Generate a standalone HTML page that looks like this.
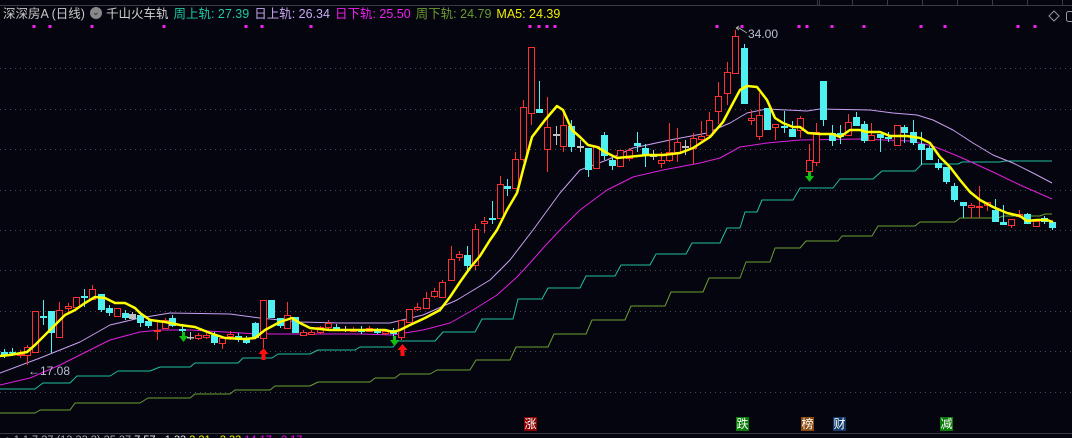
<!DOCTYPE html>
<html><head><meta charset="utf-8">
<style>
html,body{margin:0;padding:0;background:#05050f;}
#w{position:relative;width:1072px;height:438px;overflow:hidden;background:#05050f;font-family:"Liberation Sans","Noto Sans CJK SC",sans-serif;}
#hdr{position:absolute;left:3px;top:5px;font-size:12.5px;white-space:nowrap;line-height:18px;}
#hdr span{margin-right:5px}
svg{position:absolute;left:0;top:0}
.bl{position:absolute;top:417px;width:13px;height:14px;color:#fff;font-size:12px;line-height:14px;text-align:center;font-family:"Liberation Sans","Noto Sans CJK SC",sans-serif;}
#bot{position:absolute;left:0;top:434px;height:4px;width:1072px;overflow:hidden;font-size:11px;white-space:nowrap}
#bot div{position:relative;top:0px;left:4px;color:#bbb}
</style></head><body>
<div id="w">
<svg id="s" width="1072" height="438" xmlns="http://www.w3.org/2000/svg"></svg>
<div id="hdr"><span style="color:#c8c8c8">深深房A (日线)</span><span style="display:inline-block;width:12px;height:12px;border-radius:6px;background:#888;vertical-align:-1px;margin-right:4px;position:relative"><span style="position:absolute;left:2px;top:-4px;color:#222;font-size:9px">⌄</span></span><span style="color:#d0d0d0">千山火车轨</span><span style="color:#20c8a0">周上轨: 27.39</span><span style="color:#c8a8f0">日上轨: 26.34</span><span style="color:#f020f0">日下轨: 25.50</span><span style="color:#6a9a30">周下轨: 24.79</span><span style="color:#f0f000">MA5: 24.39</span></div>
<div class="bl" style="left:524px;background:#8a0000">涨</div>
<div class="bl" style="left:736px;background:#087a08">跌</div>
<div class="bl" style="left:801px;background:#8a4a10">榜</div>
<div class="bl" style="left:833px;background:#103a6a">财</div>
<div class="bl" style="left:940px;background:#087a08">减</div>
<div id="bot"><div><span style="color:#aaa">● 1.1 7.27 (13.33 2) 25.27 </span> <span style="color:#eee">7.57 &nbsp; 1.33</span> <span style="color:#ff0">2.21 &nbsp; 2.33</span> <span style="color:#f0f">14.17 &nbsp; 2.17</span></div></div>
</div>
<script>
var s=document.getElementById('s'),NS='http://www.w3.org/2000/svg';
function el(t,a){var e=document.createElementNS(NS,t);for(var k in a)e.setAttribute(k,a[k]);s.appendChild(e);return e;}
el('line',{x1:0,y1:5.5,x2:1072,y2:5.5,stroke:'#3a3a44','stroke-width':1});
[817,819,852,887,922,957,992,1027,1062].forEach(function(x){el('line',{x1:x+.5,y1:0,x2:x+.5,y2:5,stroke:'#3a3a44'});});
[68,109,149,190,230,270,311,351,392].forEach(function(y){el('line',{x1:0,y1:y+.5,x2:1072,y2:y+.5,stroke:'#4a4a58','stroke-dasharray':'1,4'});});
el('line',{x1:0,y1:433.5,x2:1072,y2:433.5,stroke:'#3a3a44'});
[34,50,92,164,246,262,311,530,539,547,555,717,742,799,807,832,864,921,945,1018,1035].forEach(function(x){el('rect',{x:x-1.5,y:25,width:3,height:3,fill:'#f020f0'});});
el('path',{d:'M1054 11 L1059 16 L1054 21 L1049 16 Z',fill:'none',stroke:'#999'});
el('rect',{x:1066.5,y:11.5,width:8,height:10,rx:2,fill:'none',stroke:'#999'});
function step(pts,c,w){var d='M'+pts[0][0]+' '+pts[0][1];for(var i=1;i<pts.length;i++)d+=' L'+pts[i][0]+' '+pts[i][1];el('path',{d:d,fill:'none',stroke:c,'stroke-width':w||1,'stroke-linejoin':'round'});}
step([[0,389],[35,389],[43,383],[70,383],[77,376],[110,376],[118,371],[150,371],[160,367],[190,367],[195,363],[238,363],[243,358],[272,358],[278,354],[310,354],[318,350],[355,350],[360,347],[393,347],[398,341],[435,341],[443,332],[475,332],[482,319],[513,319],[518,299],[542,299],[548,288],[580,288],[586,276],[615,276],[621,265],[650,265],[656,254],[686,254],[692,243],[720,243],[727,228],[740,228],[745,212],[757,212],[762,200],[793,200],[800,188],[833,188],[840,179],[873,179],[882,171],[915,171],[922,164],[958,164],[962,162],[1000,162],[1005,161],[1052,161]],'#20c0a0');
step([[0,413],[35,413],[40,410],[70,410],[75,403],[140,403],[148,398],[190,398],[195,394],[230,394],[235,390],[270,390],[275,386],[310,386],[318,382],[370,382],[375,378],[395,378],[400,374],[430,374],[437,370],[470,370],[476,360],[510,360],[516,347],[548,347],[554,334],[586,334],[592,320],[625,320],[631,306],[665,306],[671,292],[703,292],[709,278],[740,278],[746,262],[770,262],[775,248],[800,248],[806,241],[838,241],[842,236],[872,236],[878,226],[915,226],[920,222],[955,222],[960,218],[998,218],[1003,216],[1040,216],[1045,214],[1052,214]],'#6a9e32');
step([[0,385],[30,378],[60,365],[90,350],[110,340],[140,332],[160,330],[190,330],[260,334],[300,334],[360,334],[393,335],[423,330],[450,323],[473,310],[497,295],[517,277],[530,263],[545,246],[560,230],[580,210],[607,190],[633,177],[663,170],[700,163],[720,158],[740,147],[767,143],[800,140],[860,139],[910,141],[933,146],[960,157],[993,172],[1020,185],[1052,199]],'#e020e0');
step([[0,373],[40,358],[80,342],[110,325],[140,318],[170,313],[230,314],[260,318],[300,322],[340,323],[390,323],[423,315],[457,300],[490,280],[510,260],[533,230],[560,193],[580,170],[607,160],[633,148],[670,140],[707,133],[730,123],[747,113],[767,109],[807,111],[820,109],[870,110],[893,113],[917,115],[933,120],[953,130],[973,143],[993,155],[1013,163],[1033,173],[1052,183]],'#c8a0f0');
var C=[[4,352,356,349,358,'c'],[12,352,353,348,356,'c'],[20,354,355,350,358,'r'],[27,347,355,345,365,'r'],[35,311,352,311,352,'r'],[43,316,318,300,325,'c'],[51,311,333,311,353,'c'],[59,310,337,302,337,'r'],[68,306,308,303,312,'r'],[76,297,307,297,310,'r'],[84,296,298,289,307,'c'],[92,289,299,285,299,'r'],[101,294,310,294,312,'c'],[109,308,313,305,316,'c'],[117,308,316,308,316,'r'],[125,313,318,310,320,'c'],[132,314,319,312,320,'w'],[140,315,323,313,327,'c'],[148,321,326,318,328,'c'],[157,330,331,320,340,'r'],[165,320,328,318,328,'r'],[172,318,326,315,327,'c'],[182,329,331,324,333,'c'],[190,337,338,332,340,'w'],[198,335,338,333,340,'r'],[206,335,337,330,339,'r'],[214,335,343,332,345,'c'],[222,338,343,338,349,'r'],[230,334,336,331,340,'r'],[238,336,340,333,342,'c'],[246,338,343,336,344,'c'],[255,323,338,322,339,'c'],[263,300,338,300,348,'r'],[271,300,318,300,318,'c'],[280,318,326,318,328,'c'],[287,315,328,302,328,'r'],[295,317,333,317,333,'c'],[303,332,335,330,336,'r'],[311,332,334,330,335,'r'],[320,327,332,326,334,'r'],[328,323,327,320,329,'r'],[336,327,330,324,331,'c'],[345,329,330,326,332,'w'],[353,329,331,327,332,'r'],[361,329,332,326,334,'c'],[369,328,331,326,332,'r'],[377,330,333,328,334,'c'],[385,331,333,329,335,'r'],[393,330,334,328,336,'c'],[401,320,337,320,340,'r'],[409,309,322,309,322,'r'],[417,307,309,303,311,'r'],[426,298,308,292,308,'r'],[434,291,296,288,298,'r'],[442,282,297,280,297,'r'],[451,259,280,246,280,'r'],[459,254,257,251,261,'r'],[467,255,266,246,272,'c'],[475,229,265,224,270,'r'],[484,221,223,217,233,'r'],[492,218,220,201,224,'c'],[500,184,218,176,218,'r'],[507,186,189,179,196,'c'],[515,159,188,152,188,'r'],[523,107,159,100,162,'r'],[531,47,113,47,125,'r'],[539,109,113,81,113,'c'],[547,127,149,97,172,'r'],[556,134,136,126,145,'w'],[563,125,146,113,152,'r'],[571,126,147,120,152,'c'],[580,146,148,140,152,'w'],[588,148,170,148,177,'c'],[596,146,168,146,168,'r'],[604,135,156,132,160,'c'],[612,160,166,158,170,'c'],[620,150,166,150,166,'r'],[629,150,158,148,161,'r'],[637,143,146,132,152,'c'],[645,148,156,144,167,'c'],[653,155,157,150,160,'w'],[661,160,163,152,168,'r'],[669,152,160,123,162,'r'],[677,142,152,128,162,'r'],[685,146,148,140,155,'w'],[693,138,148,133,164,'r'],[701,136,139,121,141,'r'],[709,120,135,112,135,'r'],[718,96,111,82,124,'r'],[727,72,93,62,105,'r'],[735,36,73,30,73,'r'],[744,48,104,44,104,'c'],[751,118,120,110,125,'r'],[759,115,136,93,140,'r'],[767,108,130,108,130,'c'],[775,124,127,124,140,'r'],[784,126,128,111,133,'c'],[792,129,137,121,137,'c'],[800,118,130,116,138,'r'],[809,160,171,144,171,'r'],[816,132,162,123,166,'r'],[823,81,120,81,126,'c'],[832,133,141,125,146,'c'],[840,133,137,125,144,'c'],[848,122,135,114,135,'r'],[856,117,126,112,126,'c'],[864,124,141,121,143,'c'],[871,135,140,123,140,'r'],[880,134,138,134,152,'c'],[888,137,139,132,142,'c'],[897,125,145,125,145,'r'],[904,127,133,125,143,'c'],[913,132,143,120,145,'c'],[921,144,150,132,165,'c'],[929,148,160,146,160,'c'],[938,163,168,159,170,'c'],[946,167,182,167,184,'c'],[954,186,200,183,202,'c'],[963,202,206,202,218,'c'],[971,205,207,203,218,'r'],[979,206,207,186,218,'r'],[987,202,205,202,211,'r'],[995,210,222,199,222,'c'],[1003,222,225,205,225,'c'],[1011,219,225,219,228,'r'],[1019,214,216,210,218,'r'],[1027,214,224,213,224,'c'],[1036,221,226,221,226,'r'],[1044,218,222,216,224,'c'],[1052,222,228,222,230,'c']];
C.forEach(function(k){var x=k[0],col=k[5]=='r'?'#ff3030':(k[5]=='c'?'#50f0f0':'#c0c0c0');
 if(k[5]=='r'){el('line',{x1:x+.5,y1:k[3],x2:x+.5,y2:k[1],stroke:col});el('line',{x1:x+.5,y1:k[2],x2:x+.5,y2:k[4],stroke:col});
  el('rect',{x:x-2.5,y:k[1]+.5,width:6,height:Math.max(1,k[2]-k[1]),fill:'#05050f',stroke:col});}
 else{el('line',{x1:x+.5,y1:k[3],x2:x+.5,y2:k[4],stroke:col});
  el('rect',{x:x-3,y:k[1],width:7,height:Math.max(1.5,k[2]-k[1]),fill:col});}
});
step([[0,356],[10,355],[27,352],[35,345],[45,335],[55,325],[65,315],[75,310],[85,303],[95,297],[105,298],[115,303],[125,303],[135,308],[140,313],[150,320],[165,322],[180,325],[195,327],[210,333],[225,338],[245,339],[255,338],[265,330],[280,322],[292,318],[300,323],[310,328],[330,330],[360,330],[385,330],[393,332],[400,330],[410,325],[425,318],[440,310],[450,297],[460,282],[470,268],[480,256],[490,240],[497,230],[507,210],[517,193],[523,170],[532,137],[545,120],[557,106],[563,110],[572,130],[580,137],[588,145],[597,147],[607,153],[617,158],[627,157],[647,155],[663,155],[680,153],[693,148],[710,137],[723,122],[733,103],[740,90],[747,86],[757,87],[767,100],[775,118],[783,123],[793,127],[800,127],[808,133],[820,134],[833,134],[840,137],[850,130],[860,130],[867,132],[880,132],[890,136],[907,136],[920,138],[930,143],[940,157],[950,167],[960,180],[970,192],[980,200],[993,207],[1007,213],[1020,216],[1027,221],[1037,220],[1047,220],[1053,222]],'#ffff00',2.5);
function dn(x,y){el('path',{d:'M'+(x-1)+' '+(y-8)+' h3 v4 h3 l-4.5 6 l-4.5 -6 h3 z',fill:'#10c010'});}
function up(x,y){el('path',{d:'M'+(x+.5)+' '+y+' l5 6 h-3 v6 h-4 v-6 h-3 z',fill:'#ff1010'});}
dn(183,340);dn(394,344);dn(809,180);up(263,348);up(402,344);
var t=el('text',{x:748,y:38,fill:'#b8c0d0','font-size':12,'font-family':'Liberation Sans'});t.textContent='34.00';
el('path',{d:'M736 28 l3 -2 M736 28 l3 2 M736 28 h3 l8 5',stroke:'#aaa',fill:'none'});
t=el('text',{x:28,y:375,fill:'#b8c0d0','font-size':12,'font-family':'Liberation Sans'});t.textContent='←17.08';
</script>
</body></html>
